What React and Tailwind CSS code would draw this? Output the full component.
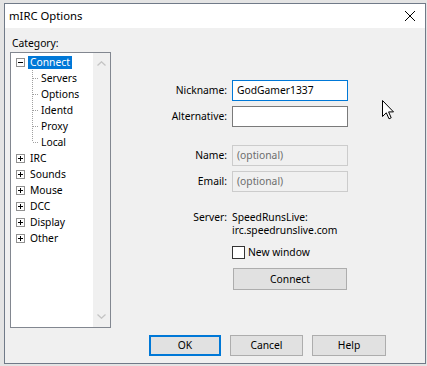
import React from 'react';

const font = { fontFamily: '"Noto Sans", "Open Sans", sans-serif' };

const topItems = ['IRC', 'Sounds', 'Mouse', 'DCC', 'Display', 'Other'];
const children = ['Servers', 'Options', 'Identd', 'Proxy', 'Local'];

function Expander({ open }) {
  return (
    <svg width="9" height="9" viewBox="0 0 9 9" className="shrink-0">
      <rect x="0.5" y="0.5" width="8" height="8" fill="#fff" stroke="#919191" />
      <line x1="2" y1="4.5" x2="7" y2="4.5" stroke="#000" />
      {!open && <line x1="4.5" y1="2" x2="4.5" y2="7" stroke="#000" />}
    </svg>
  );
}

function Connector({ last }) {
  return (
    <svg width="12" height="16" viewBox="0 0 12 16" className="shrink-0">
      <line x1="5.5" y1="0" x2="5.5" y2={last ? 8 : 16} stroke="#a0a0a0" strokeDasharray="1 1" />
      <line x1="6" y1="8.5" x2="12" y2="8.5" stroke="#a0a0a0" strokeDasharray="1 1" />
    </svg>
  );
}

function Input({ value, placeholder, focused, disabled }) {
  const border = focused ? 'border-[#0078d7]' : disabled ? 'border-[#cccccc]' : 'border-[#7a7a7a]';
  return (
    <div
      className={`w-[116px] h-[21px] border ${border} ${disabled ? 'bg-[#f0f0f0] text-[#6d6d6d]' : 'bg-white text-black'} pl-[4px] flex items-center text-[10.3px] leading-none`}
    >
      {value || placeholder}
    </div>
  );
}

function Row({ label, children: content, className = '' }) {
  return (
    <div className={`flex items-center ${className}`}>
      <div className="w-[116px] text-right text-[10.3px] leading-none">{label}</div>
      <div className="ml-[5px]">{content}</div>
    </div>
  );
}

function Button({ label, primary, className = '' }) {
  return (
    <div
      className={`flex items-center justify-center bg-[#e1e1e1] text-[10.3px] leading-none ${primary ? 'border-2 border-[#0078d7]' : 'border border-[#adadad]'} ${className}`}
    >
      {label}
    </div>
  );
}

export default function App() {
  return (
    <div className="w-[427px] h-[366px] bg-[#e4e4e4] overflow-hidden pl-[4px] pt-[3px] relative text-black" style={font}>
      <div className="w-[422px] h-[361px] border border-[#707a88] bg-[#f0f0f0] flex flex-col">
        {/* Title bar */}
        <div className="h-[24px] bg-white flex items-center justify-between pl-[4px] pr-[10px] shrink-0">
          <span className="text-[11.3px]">mIRC Options</span>
          <svg width="10" height="10" viewBox="0 0 10 10">
            <path d="M0 0L10 10M10 0L0 10" stroke="#000" strokeWidth="1" />
          </svg>
        </div>

        <div className="flex flex-1">
          {/* Category tree */}
          <div className="pl-[5px] pt-[8px]">
            <div className="pl-[2px] text-[10.3px] leading-[15px]">Category:</div>
            <div className="mt-[1px] w-[101px] h-[276px] border border-[#828790] bg-white flex">
              <div className="flex-1 pt-[1px] text-[10.3px]">
                <div className="h-[16px] flex items-center pl-[5px]">
                  <Expander open />
                  <span className="ml-[3px] px-[2px] h-[13px] leading-[13px] bg-[#0078d7] text-white">Connect</span>
                </div>
                {children.map((c, i) => (
                  <div key={c} className="h-[16px] flex items-center pl-[16px]">
                    <Connector last={i === children.length - 1} />
                    <span className="px-[2px] leading-[16px]">{c}</span>
                  </div>
                ))}
                {topItems.map((t) => (
                  <div key={t} className="h-[16px] flex items-center pl-[5px]">
                    <Expander />
                    <span className="ml-[3px] px-[2px] leading-[16px]">{t}</span>
                  </div>
                ))}
              </div>
              {/* Scrollbar */}
              <div className="w-[17px] bg-[#f0f0f0] flex flex-col justify-between items-center py-[8px]">
                <svg width="9" height="5" viewBox="0 0 9 5">
                  <path d="M0.5 4.5L4.5 0.8L8.5 4.5" fill="none" stroke="#c4c4c4" strokeWidth="1.3" />
                </svg>
                <svg width="9" height="5" viewBox="0 0 9 5">
                  <path d="M0.5 0.5L4.5 4.2L8.5 0.5" fill="none" stroke="#c4c4c4" strokeWidth="1.3" />
                </svg>
              </div>
            </div>
          </div>

          {/* Connect form */}
          <div className="pt-[52px] flex flex-col">
            <Row label="Nickname:">
              <Input value="GodGamer1337" focused />
            </Row>
            <Row label="Alternative:" className="mt-[5px]">
              <Input />
            </Row>
            <Row label="Name:" className="mt-[18px]">
              <Input placeholder="(optional)" disabled />
            </Row>
            <Row label="Email:" className="mt-[5px]">
              <Input placeholder="(optional)" disabled />
            </Row>
            <div className="flex mt-[19px] text-[10.3px] leading-[13px]">
              <div className="w-[116px] text-right">Server:</div>
              <div className="ml-[5px]">
                <div>SpeedRunsLive:</div>
                <div>irc.speedrunslive.com</div>
              </div>
            </div>
            <div className="flex items-center mt-[9px] ml-[121px] h-[13px]">
              <div className="w-[13px] h-[13px] border border-[#333333] bg-white" />
              <span className="ml-[3px] text-[10.3px] leading-none">New window</span>
            </div>
            <Button label="Connect" className="mt-[9px] ml-[122px] w-[114px] h-[22px]" />
          </div>
        </div>

        {/* Dialog buttons */}
        <div className="flex justify-end gap-[9px] pr-[39px] pb-[7px]">
          <Button label="OK" primary className="w-[72px] h-[21px]" />
          <Button label="Cancel" className="w-[73px] h-[21px]" />
          <Button label="Help" className="w-[74px] h-[21px]" />
        </div>
      </div>

      {/* Mouse cursor */}
      <svg className="absolute left-[382px] top-[100px]" width="12" height="20" viewBox="0 0 12 20">
        <path d="M0.5 0.5V16.5L4.3 12.8L7 18.8L9.2 17.8L6.6 11.9H11.5Z" fill="#fff" stroke="#000" strokeWidth="1" strokeLinejoin="miter" />
      </svg>
    </div>
  );
}
